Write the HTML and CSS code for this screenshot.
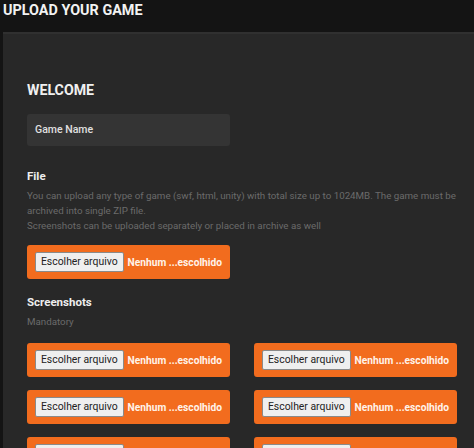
FILE: index.html
```html
<!DOCTYPE html>
<html>
<head>
<meta charset="utf-8">
<link rel="stylesheet" href="styles.css">
</head>
<body>
<header class="topbar">
  <h1 class="page-title">UPLOAD YOUR GAME</h1>
</header>
<main class="panel">
  <h2 class="welcome">WELCOME</h2>
  <div class="text-input">Game Name</div>

  <section class="field">
    <h3 class="field-label">File</h3>
    <p class="hint">You can upload any type of game (swf, html, unity) with total size up to 1024MB. The game must be archived into single ZIP file.<br>Screenshots can be uploaded separately or placed in archive as well</p>
    <div class="file-box">
      <span class="file-btn">Escolher arquivo</span>
      <span class="file-status">Nenhum ...escolhido</span>
    </div>
  </section>

  <section class="field">
    <h3 class="field-label">Screenshots</h3>
    <p class="hint">Mandatory</p>
    <div class="shots">
      <div class="file-box"><span class="file-btn">Escolher arquivo</span><span class="file-status">Nenhum ...escolhido</span></div>
      <div class="file-box"><span class="file-btn">Escolher arquivo</span><span class="file-status">Nenhum ...escolhido</span></div>
      <div class="file-box"><span class="file-btn">Escolher arquivo</span><span class="file-status">Nenhum ...escolhido</span></div>
      <div class="file-box"><span class="file-btn">Escolher arquivo</span><span class="file-status">Nenhum ...escolhido</span></div>
      <div class="file-box"><span class="file-btn">Escolher arquivo</span><span class="file-status">Nenhum ...escolhido</span></div>
      <div class="file-box"><span class="file-btn">Escolher arquivo</span><span class="file-status">Nenhum ...escolhido</span></div>
    </div>
  </section>
</main>
</body>
</html>
```
FILE: styles.css
```css
html, body {
  margin: 0;
  padding: 0;
  background: #141414;
  font-family: Roboto, "Liberation Sans", sans-serif;
  overflow: hidden;
}
.topbar {
  height: 32px;
  padding-left: 3px;
}
.page-title {
  margin: 0;
  padding-top: 1px;
  font-size: 14.4px;
  font-weight: 700;
  color: #f2f2f2;
  line-height: 20px;
}
.panel {
  margin-left: 3px;
  width: 500px;
  background: #282828;
  border-top: 2px solid #303030;
  padding: 47px 24px 24px 24px;
  min-height: 500px;
}
.welcome {
  margin: 0;
  font-size: 14.2px;
  font-weight: 700;
  color: #f0f0f0;
  line-height: 18px;
}
.text-input {
  margin-top: 15px;
  width: 203px;
  height: 32px;
  box-sizing: border-box;
  background: #343434;
  border-radius: 3px;
  padding: 0 8px;
  font-size: 10.5px;
  font-weight: 500;
  color: #e0e0e0;
  line-height: 32px;
}
.field {
  margin-top: 22px;
}
.field + .field {
  margin-top: 15px;
}
.field-label {
  margin: 0;
  font-size: 11.5px;
  font-weight: 700;
  color: #eeeeee;
  line-height: 16px;
}
.hint {
  margin: 4px 0 0 0;
  width: 440px;
  font-size: 9.75px;
  color: #6b6b6b;
  line-height: 15px;
}
.file-box {
  margin-top: 12px;
  width: 203px;
  height: 34px;
  box-sizing: border-box;
  background: #f26c1e;
  border-radius: 3px;
  padding: 0 8px;
  display: flex;
  align-items: center;
  gap: 4px;
}
.file-btn {
  width: 89px;
  height: 20px;
  box-sizing: border-box;
  text-align: center;
  background: #efefef;
  border: 1px solid #8a8a8a;
  border-radius: 2px;
  font-size: 10.4px;
  color: #222;
  line-height: 18px;
  white-space: nowrap;
}
.file-status {
  font-size: 10.2px;
  font-weight: 700;
  color: #fff3ea;
  white-space: nowrap;
}
.shots {
  display: grid;
  grid-template-columns: 203px 203px;
  column-gap: 24px;
  row-gap: 13px;
  margin-top: 14px;
}
.shots .file-box {
  margin-top: 0;
}
```
